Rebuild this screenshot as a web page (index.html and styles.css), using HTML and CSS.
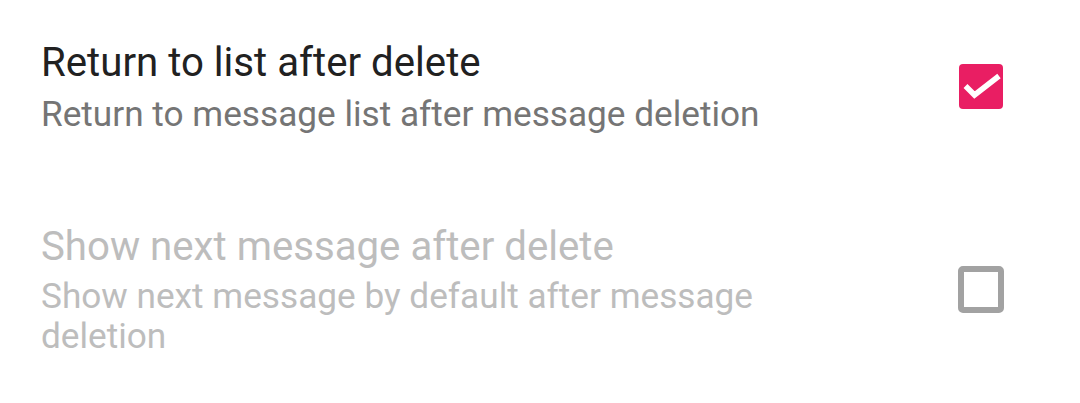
FILE: index.html
```html
<!DOCTYPE html>
<html>
<head>
<meta charset="utf-8">
<link rel="stylesheet" href="styles.css">
</head>
<body>
<div class="list">
  <div class="pref">
    <div class="text">
      <div class="title">Return to list after delete</div>
      <div class="summary">Return to message list after message deletion</div>
    </div>
    <div class="widget">
      <span class="box checked">
        <svg viewBox="0 0 44 45" width="44" height="45"><path d="M6.5 22 L15.5 31 L40 12" fill="none" stroke="#fff" stroke-width="5.5"/></svg>
      </span>
    </div>
  </div>
  <div class="pref disabled">
    <div class="text">
      <div class="title">Show next message after delete</div>
      <div class="summary">Show next message by default after message deletion</div>
    </div>
    <div class="widget">
      <span class="box"></span>
    </div>
  </div>
</div>
</body>
</html>
```
FILE: styles.css
```css
html, body {
  margin: 0;
  padding: 0;
  background: #ffffff;
}
body {
  width: 1080px;
  height: 403px;
  overflow: hidden;
  font-family: Roboto, "Noto Sans", sans-serif;
}
.list {
  display: flex;
  flex-direction: column;
  padding-top: 39px;
  gap: 89px;
}
.pref {
  display: flex;
  align-items: center;
  padding-left: 41px;
  padding-right: 77px;
}
.text {
  flex: 1;
  max-width: 780px;
}
.title {
  font-size: 40.2px;
  line-height: 48px;
  color: #212121;
}
.summary {
  margin-top: 7px;
  font-size: 35.2px;
  line-height: 40px;
  color: #757575;
}
.disabled .title,
.disabled .summary {
  color: #bdbdbd;
}
.disabled .summary {
  margin-top: 5px;
}
.widget {
  margin-left: auto;
  display: flex;
}
.box {
  width: 46px;
  height: 47px;
  margin: -1px;
  box-sizing: border-box;
  border-radius: 5px;
  border: 6px solid #a2a2a2;
  display: block;
}
.box.checked {
  width: 44px;
  height: 45px;
  margin: 0;
  border-radius: 4px;
  background: #e91e63;
  border: none;
}
.box svg {
  display: block;
}
```
